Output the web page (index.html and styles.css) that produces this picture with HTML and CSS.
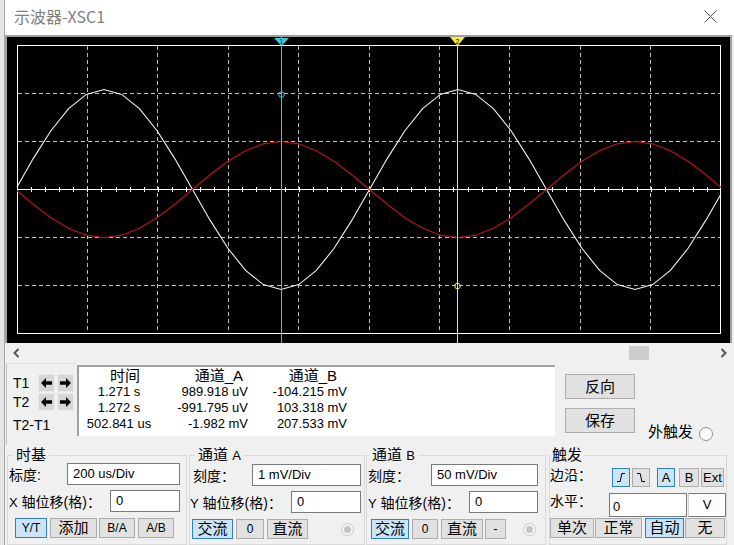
FILE: index.html
```html
<!DOCTYPE html>
<html>
<head>
<meta charset="utf-8">
<title>示波器-XSC1</title>
<link rel="stylesheet" href="styles.css">
</head>
<body>
<div class="win">
  <div class="titlebar">
    <span class="title">示波器-XSC1</span>
    <svg class="close" width="13" height="13" viewBox="0 0 13 13"><path d="M0.5 0.5L12.5 12.5M12.5 0.5L0.5 12.5" stroke="#555" stroke-width="1"/></svg>
  </div>

  <div class="scope">
    <svg width="723" height="306" viewBox="0 0 723 306">
      <g stroke="#bdbdbd" stroke-width="1" stroke-dasharray="4 3" shape-rendering="crispEdges" fill="none">
        <path d="M80.5 9V296M150.5 9V296M221.5 9V296M291.5 9V296M362.5 9V296M432.5 9V296M502.5 9V296M573.5 9V296M643.5 9V296"/>
        <path d="M11 56.5H713M11 104.5H713M11 200.5H713M11 248.5H713"/>
      </g>
      <rect x="10.5" y="8.5" width="703" height="288" fill="none" stroke="#fff" shape-rendering="crispEdges"/>
      <path d="M10 152.5H714" stroke="#fff" shape-rendering="crispEdges"/>
      <path d="M10 152.5H714" stroke="#fff" stroke-width="5" stroke-dasharray="1 13.08" shape-rendering="crispEdges"/>
      <polyline fill="none" stroke="#f4f4f4" stroke-width="1.1" points="10,149.9 26.2,121.6 43.9,93.7 61.6,71.6 79.3,57.4 97,52.5 114.7,57.4 132.4,71.6 150.1,93.7 167.8,121.6 185.5,152.5 203.2,183.4 220.9,211.3 238.6,233.4 256.3,247.6 274,252.5 291.7,247.6 309.4,233.4 327.1,211.3 344.8,183.4 362.5,152.5 380.2,121.6 397.9,93.7 415.6,71.6 433.3,57.4 451,52.5 468.7,57.4 486.4,71.6 504.1,93.7 521.8,121.6 539.5,152.5 557.2,183.4 574.9,211.3 592.6,233.4 610.3,247.6 628,252.5 645.7,247.6 663.4,233.4 681.1,211.3 698.8,183.4 714,156.9"/>
      <polyline fill="none" stroke="#b8141a" stroke-width="1.2" points="10,153.8 26.2,167.3 43.9,180.7 61.6,191.3 79.3,198.2 97,200.5 114.7,198.2 132.4,191.3 150.1,180.7 167.8,167.3 185.5,152.5 203.2,137.7 220.9,124.3 238.6,113.7 256.3,106.8 274,104.5 291.7,106.8 309.4,113.7 327.1,124.3 344.8,137.7 362.5,152.5 380.2,167.3 397.9,180.7 415.6,191.3 433.3,198.2 451,200.5 468.7,198.2 486.4,191.3 504.1,180.7 521.8,167.3 539.5,152.5 557.2,137.7 574.9,124.3 592.6,113.7 610.3,106.8 628,104.5 645.7,106.8 663.4,113.7 681.1,124.3 698.8,137.7 714,150.4"/>
      <path d="M274.5 0V306" stroke="#3fc9d6" shape-rendering="crispEdges"/>
      <path d="M450.5 0V306" stroke="#e8e86a" shape-rendering="crispEdges"/>
      <polygon points="267,1 282,1 274.5,9" fill="#3fc9d6"/>
      <polygon points="443,0 458,0 450.5,9" fill="#f2f230"/>
      <text x="274.5" y="6.5" font-size="7" font-family="Liberation Sans" text-anchor="middle" fill="#0a4a50">1</text>
      <text x="450.5" y="6.5" font-size="7" font-family="Liberation Sans" text-anchor="middle" fill="#000">2</text>
      <circle cx="274.5" cy="57.5" r="2.8" fill="none" stroke="#3fc9d6"/>
      <circle cx="450.5" cy="249" r="2.8" fill="none" stroke="#e8e86a"/>
    </svg>
  </div>

  <div class="hscroll">
    <svg class="chev" width="7" height="10" viewBox="0 0 7 10"><path d="M5.5 1L1.5 5L5.5 9" stroke="#555" stroke-width="2" fill="none"/></svg>
    <div class="thumb"></div>
    <svg class="chev" width="7" height="10" viewBox="0 0 7 10"><path d="M1.5 1L5.5 5L1.5 9" stroke="#555" stroke-width="2" fill="none"/></svg>
  </div>

  <div class="mid">
    <div class="cursors">
      <div class="crow">
        <span class="tlabel">T1</span>
        <span class="ab"><svg width="11" height="10" viewBox="0 0 11 10"><path d="M0 5L5 0V3.2H11V6.8H5V10Z"/></svg></span>
        <span class="ab"><svg width="11" height="10" viewBox="0 0 11 10"><path d="M11 5L6 0V3.2H0V6.8H6V10Z"/></svg></span>
      </div>
      <div class="crow second">
        <span class="tlabel">T2</span>
        <span class="ab"><svg width="11" height="10" viewBox="0 0 11 10"><path d="M0 5L5 0V3.2H11V6.8H5V10Z"/></svg></span>
        <span class="ab"><svg width="11" height="10" viewBox="0 0 11 10"><path d="M11 5L6 0V3.2H0V6.8H6V10Z"/></svg></span>
      </div>
      <div class="crow third">
        <span class="tlabel">T2-T1</span>
      </div>
    </div>

    <div class="readout">
      <span class="h c1">时间</span><span class="h c2">通道_A</span><span class="h c3">通道_B</span>
      <span class="v c1">1.271 s</span><span class="v c2">989.918 uV</span><span class="v c3">-104.215 mV</span>
      <span class="v c1">1.272 s</span><span class="v c2">-991.795 uV</span><span class="v c3">103.318 mV</span>
      <span class="v c1">502.841 us</span><span class="v c2">-1.982 mV</span><span class="v c3">207.533 mV</span>
    </div>

    <div class="side">
      <span class="bigbtn">反向</span>
      <span class="bigbtn">保存</span>
    </div>
    <div class="ext">外触发<span class="radio-ext"></span></div>
  </div>

  <div class="groups">
    <fieldset class="grp g1">
      <legend>时基</legend>
      <div class="row r1">
        <span class="lbl">标度:</span>
        <span class="inp w113">200 us/Div</span>
      </div>
      <div class="row r2">
        <span class="lbl"><span class="lat">X</span> 轴位移(格)：</span>
        <span class="inp w70">0</span>
      </div>
      <div class="row btns">
        <span class="b on small w32">Y/T</span>
        <span class="b w47 m3">添加</span>
        <span class="b small w36 m2">B/A</span>
        <span class="b small w36 m3">A/B</span>
      </div>
    </fieldset>

    <fieldset class="grp g2">
      <legend>通道 <span class="lat">A</span></legend>
      <div class="row r1">
        <span class="lbl">刻度：</span>
        <span class="inp w109">1 mV/Div</span>
      </div>
      <div class="row r2">
        <span class="lbl"><span class="lat">Y</span> 轴位移(格)：</span>
        <span class="inp w70">0</span>
      </div>
      <div class="row btns">
        <span class="b on w41">交流</span>
        <span class="b small w28 m3">0</span>
        <span class="b w41 m3">直流</span>
        <span class="rad m33"></span>
      </div>
    </fieldset>

    <fieldset class="grp g3">
      <legend>通道 <span class="lat">B</span></legend>
      <div class="row r1">
        <span class="lbl">刻度：</span>
        <span class="inp w107">50 mV/Div</span>
      </div>
      <div class="row r2">
        <span class="lbl"><span class="lat">Y</span> 轴位移(格)：</span>
        <span class="inp w69">0</span>
      </div>
      <div class="row btns">
        <span class="b on w38">交流</span>
        <span class="b small w26 m3">0</span>
        <span class="b w42 m3">直流</span>
        <span class="b small w21 m2">-</span>
        <span class="rad m17"></span>
      </div>
    </fieldset>

    <fieldset class="grp g4">
      <legend>触发</legend>
      <div class="row r1">
        <span class="lbl">边沿：</span>
        <div class="edges">
          <span class="eb on"><svg width="10" height="11" viewBox="0 0 10 11"><path d="M1 9.5H4.2L5.8 1.5H9" stroke="#000" fill="none"/></svg></span>
          <span class="eb m2"><svg width="10" height="11" viewBox="0 0 10 11"><path d="M1 1.5H4.2L5.8 9.5H9" stroke="#000" fill="none"/></svg></span>
          <span class="eb on m7">A</span>
          <span class="eb w20 m4">B</span>
          <span class="eb w23 m2">Ext</span>
        </div>
      </div>
      <div class="row r2 lvl">
        <span class="lbl">水平：</span>
        <span class="inp tall level w78">0</span>
        <span class="inp tall unit w38">V</span>
      </div>
      <div class="row btns trig">
        <span class="b w44">单次</span>
        <span class="b w47 m1">正常</span>
        <span class="b on w39 m3">自动</span>
        <span class="b w40 m1">无</span>
      </div>
    </fieldset>
  </div>
</div>
</body>
</html>
```
FILE: styles.css
```css
* { box-sizing: border-box; }
html, body { margin: 0; padding: 0; }
body {
  width: 734px;
  height: 545px;
  overflow: hidden;
  background: #e4e4e4;
  font-family: "Liberation Sans", "Noto Sans CJK SC", sans-serif;
  color: #000;
}
.win {
  margin-left: 4px;
  width: 730px;
  height: 545px;
  border-left: 1px solid #a8a8a8;
  background: #f0f0f0;
  display: flex;
  flex-direction: column;
}
.titlebar {
  height: 35px;
  flex: none;
  background: #fff;
  display: flex;
  align-items: center;
  justify-content: space-between;
  padding: 0 17px 3px 9px;
}
.title {
  font-family: "Noto Sans CJK SC", "Liberation Sans", sans-serif;
  font-size: 16px;
  line-height: 20px;
  color: #808080;
}
.close { display: block; }

.scope {
  flex: none;
  width: 727px;
  height: 308px;
  background: #000;
  border-top: 2px solid #a0a0a0;
  border-left: 2px solid #a0a0a0;
  border-right: 2px solid #a0a0a0;
}
.scope svg { display: block; }

.hscroll {
  flex: none;
  height: 20px;
  display: flex;
  align-items: center;
  padding: 0 7px 0 8px;
}
.chev { display: block; }
.thumb {
  width: 20px;
  height: 14px;
  background: #cdcdcd;
  margin-left: auto;
  margin-right: 71px;
}

.mid {
  flex: none;
  height: 82px;
  display: flex;
}
.cursors {
  margin-left: 1px;
  width: 70px;
  border-left: 1px solid #c4c4c4;
  border-top: 1px solid #dedede;
  padding: 10px 0 0 6px;
}
.crow {
  display: flex;
  align-items: center;
  height: 18px;
  gap: 2px;
}
.crow.second { margin-top: 1px; }
.crow.third { margin-top: 5px; }
.tlabel {
  width: 23px;
  font-size: 14px;
  line-height: 17px;
  white-space: nowrap;
}
.ab {
  width: 17px;
  height: 18px;
  background: #d6d6d6;
  border: 1px solid #ebebeb;
  display: flex;
  align-items: center;
  justify-content: center;
}
.ab svg { display: block; fill: #000; }

.readout {
  margin: 2px 0 0 1px;
  width: 478px;
  height: 71px;
  background: #fff;
  border-top: 2px solid #a0a0a0;
  border-left: 2px solid #a0a0a0;
  display: grid;
  grid-template-columns: 80px 90px 100px;
  grid-template-rows: 17px 16px 16px 16px;
  align-content: start;
}
.readout .h {
  font-size: 15px;
  line-height: 17px;
  white-space: nowrap;
}
.readout .v {
  font-size: 13px;
  line-height: 16px;
  white-space: nowrap;
}
.readout .c1 { text-align: center; }
.readout .h.c1 { padding-left: 12px; }
.readout .c2 { text-align: right; padding-right: 1px; }
.readout .h.c2 { padding-right: 6px; }
.readout .c3 { text-align: right; padding-right: 2px; }
.readout .h.c3 { padding-right: 12px; }

.side {
  margin-left: 10px;
  padding-top: 11px;
  display: flex;
  flex-direction: column;
  gap: 9px;
}
.bigbtn {
  width: 70px;
  height: 25px;
  background: #e1e1e1;
  border: 1px solid #adadad;
  font-size: 15px;
  line-height: 23px;
  text-align: center;
}
.ext {
  align-self: flex-end;
  margin: 0 0 3px 13px;
  display: flex;
  align-items: center;
  gap: 6px;
  font-size: 15px;
  line-height: 20px;
  white-space: nowrap;
}
.radio-ext {
  width: 14px;
  height: 14px;
  border-radius: 50%;
  background: #fff;
  border: 1px solid #8f8f8f;
  margin-top: 3px;
}

.groups {
  flex: none;
  display: flex;
  padding-top: 2px;
}
.grp {
  margin: 0;
  padding: 0;
  min-width: 0;
  height: 98px;
  border: 1px solid #d9d9d9;
}
.grp legend {
  font-size: 15px;
  line-height: 16px;
  padding: 0 3px;
  margin-left: 5px;
  white-space: nowrap;
}
.grp legend .lat { font-size: 13px; }
.g1 { margin-left: 2px; width: 180px; }
.g2 { margin-left: 2px; width: 176px; }
.g3 { margin-left: 1px; width: 180px; }
.g3 legend { margin-left: 2px; }
.g4 { margin-left: 3px; width: 178px; }
.g4 legend { margin-left: 0; padding: 0 2px; }

.row {
  display: flex;
  align-items: center;
  height: 22px;
}
.row.r2 { margin-top: 5px; }
.row.btns { height: 20px; margin-top: 6px; }

.lbl {
  font-size: 14px;
  line-height: 22px;
  padding-top: 2px;
  white-space: nowrap;
}
.lat { font-size: 13px; }
.inp {
  height: 22px;
  background: #fff;
  border: 1px solid #7a7a7a;
  font-size: 13px;
  line-height: 20px;
  padding-left: 5px;
  white-space: nowrap;
}
.inp.tall { height: 24px; line-height: 26px; padding-left: 3px; }
.inp.level { margin-left: auto; }
.inp.unit { border-left: 1px solid #d0d0d0; text-align: center; padding-left: 0; line-height: 22px; margin-left: 1px; }

.g1 .row { padding: 0 6px 0 1px; }
.g1 .row .inp { margin-left: auto; }
.g1 .row.btns { padding-left: 7px; }

.g2 .row.r1 { padding: 0 3px 0 3px; }
.g2 .row.r2 { padding: 0 3px 0 0; }
.g2 .row .inp { margin-left: auto; }
.g2 .row.btns { padding-left: 2px; }

.g3 .row { padding: 0 7px 0 1px; }
.g3 .row .inp { margin-left: auto; }
.g3 .row.btns { padding-left: 4px; }

.g4 .row { padding: 0; }
.g4 .row.r1 { padding-right: 2px; }
.edges { margin-left: auto; margin-top: 6px; display: flex; }
.eb {
  width: 18px;
  height: 19px;
  background: #e1e1e1;
  border: 1px solid #adadad;
  font-size: 13px;
  line-height: 17px;
  text-align: center;
  display: flex;
  align-items: center;
  justify-content: center;
}
.eb svg { display: block; }
.eb.on { background: #cce4f7; border-color: #2f7fcf; }
.g4 .row.lvl { margin-top: 8px; height: 24px; align-items: flex-start; }
.g4 .row.lvl .lbl { line-height: 16px; padding-top: 0; }
.g4 .row.trig { margin-top: 1px; }

.b {
  height: 20px;
  background: #e1e1e1;
  border: 1px solid #adadad;
  font-size: 15px;
  line-height: 18px;
  text-align: center;
  white-space: nowrap;
}
.b.small { font-size: 12px; }
.b.on { background: #cce4f7; border-color: #2f7fcf; }

.rad {
  width: 13px;
  height: 13px;
  border-radius: 50%;
  border: 1px solid #c9c9c9;
  background: #f5f5f5;
  display: flex;
  align-items: center;
  justify-content: center;
}
.rad::after {
  content: "";
  width: 7px;
  height: 7px;
  border-radius: 50%;
  background: #c4c4c4;
}

.w20 { width: 20px; }
.w21 { width: 21px; }
.w23 { width: 23px; }
.w26 { width: 26px; }
.w28 { width: 28px; }
.w32 { width: 32px; }
.w36 { width: 36px; }
.w38 { width: 38px; }
.w39 { width: 39px; }
.w40 { width: 40px; }
.w41 { width: 41px; }
.w42 { width: 42px; }
.w44 { width: 44px; }
.w47 { width: 47px; }
.w69 { width: 69px; }
.w70 { width: 70px; }
.w78 { width: 78px; }
.w107 { width: 107px; }
.w109 { width: 109px; }
.w113 { width: 113px; }
.m1 { margin-left: 1px; }
.m2 { margin-left: 2px; }
.m3 { margin-left: 3px; }
.m4 { margin-left: 4px; }
.m7 { margin-left: 7px; }
.m17 { margin-left: 17px; }
.m33 { margin-left: 33px; }
```
